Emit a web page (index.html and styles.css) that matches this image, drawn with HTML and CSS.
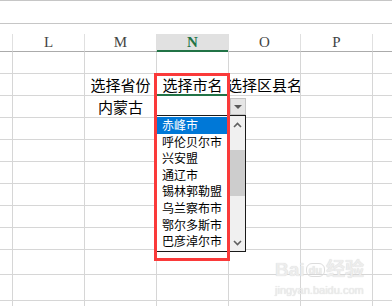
FILE: index.html
```html
<!DOCTYPE html>
<html lang="zh-CN">
<head>
    <meta charset="UTF-8">
    <meta name="viewport" content="width=device-width, initial-scale=1.0">
    <title>二级下拉菜单</title>
    <link rel="stylesheet" href="styles.css">
</head>
<body>
    <div class="sheet">
        <div class="formula-bar"></div>

        <div class="col-heads">
            <div class="corner"></div>
            <div class="col-head">L</div>
            <div class="col-head">M</div>
            <div class="col-head current">N</div>
            <div class="col-head">O</div>
            <div class="col-head">P</div>
            <div class="col-head rest"></div>
        </div>

        <div class="row">
            <div class="corner"></div>
            <div class="cell"></div><div class="cell"></div><div class="cell"></div>
            <div class="cell"></div><div class="cell"></div><div class="cell rest"></div>
        </div>
        <div class="row">
            <div class="corner"></div>
            <div class="cell"></div>
            <div class="cell">选择省份</div>
            <div class="cell above-active">选择市名</div>
            <div class="cell">选择区县名</div>
            <div class="cell"></div><div class="cell rest"></div>
        </div>
        <div class="row">
            <div class="corner"></div>
            <div class="cell"></div>
            <div class="cell">内蒙古</div>
            <div class="cell"></div>
            <div class="cell"></div><div class="cell"></div><div class="cell rest"></div>
        </div>
        <div class="row">
            <div class="corner"></div>
            <div class="cell"></div><div class="cell"></div><div class="cell"></div>
            <div class="cell"></div><div class="cell"></div><div class="cell rest"></div>
        </div>
        <div class="row">
            <div class="corner"></div>
            <div class="cell"></div><div class="cell"></div><div class="cell"></div>
            <div class="cell"></div><div class="cell"></div><div class="cell rest"></div>
        </div>
        <div class="row">
            <div class="corner"></div>
            <div class="cell"></div><div class="cell"></div><div class="cell"></div>
            <div class="cell"></div><div class="cell"></div><div class="cell rest"></div>
        </div>
        <div class="row">
            <div class="corner"></div>
            <div class="cell"></div><div class="cell"></div><div class="cell"></div>
            <div class="cell"></div><div class="cell"></div><div class="cell rest"></div>
        </div>
        <div class="row">
            <div class="corner"></div>
            <div class="cell"></div><div class="cell"></div><div class="cell"></div>
            <div class="cell"></div><div class="cell"></div><div class="cell rest"></div>
        </div>
        <div class="row">
            <div class="corner"></div>
            <div class="cell"></div><div class="cell"></div><div class="cell"></div>
            <div class="cell"></div><div class="cell"></div><div class="cell rest"></div>
        </div>
        <div class="row tall">
            <div class="corner"></div>
            <div class="cell"></div><div class="cell"></div><div class="cell"></div>
            <div class="cell"></div><div class="cell"></div><div class="cell rest"></div>
        </div>
        <div class="row taller">
            <div class="corner"></div>
            <div class="cell"></div><div class="cell"></div><div class="cell"></div>
            <div class="cell"></div><div class="cell"></div><div class="cell rest"></div>
        </div>
        <div class="row">
            <div class="corner"></div>
            <div class="cell"></div><div class="cell"></div><div class="cell"></div>
            <div class="cell"></div><div class="cell"></div><div class="cell rest"></div>
        </div>

        <!-- кнопка списка у ячейки N4 -->
        <div class="drop-btn"><span class="triangle"></span></div>

        <div class="drop-list">
            <ul class="options">
                <li class="selected">赤峰市</li>
                <li>呼伦贝尔市</li>
                <li>兴安盟</li>
                <li>通辽市</li>
                <li>锡林郭勒盟</li>
                <li>乌兰察布市</li>
                <li>鄂尔多斯市</li>
                <li>巴彦淖尔市</li>
            </ul>
            <div class="scrollbar">
                <div class="scroll-arrow">
                    <svg width="9" height="6" viewBox="0 0 9 6"><polyline points="1,5 4.5,1.5 8,5" fill="none" stroke="#606060" stroke-width="1.6"/></svg>
                </div>
                <div class="track"><div class="thumb"></div></div>
                <div class="scroll-arrow">
                    <svg width="9" height="6" viewBox="0 0 9 6"><polyline points="1,1 4.5,4.5 8,1" fill="none" stroke="#606060" stroke-width="1.6"/></svg>
                </div>
            </div>
        </div>

        <div class="red-box"></div>

        <div class="watermark">
            <div class="wm-logo">Bai<span class="wm-du">du</span>经验</div>
            <div class="wm-url">jingyan.baidu.com</div>
        </div>
    </div>
</body>
</html>
```

FILE: styles.css
```css
* {
    margin: 0;
    padding: 0;
    box-sizing: border-box;
}

body {
    background: #fff;
    color: #000;
    font-family: "Noto Sans CJK SC", sans-serif;
    overflow: hidden;
}

.sheet {
    position: relative;
    width: 392px;
    height: 306px;
    overflow: hidden;
}

.formula-bar {
    height: 24px;
    border-top: 1px solid #c6c6c6;
    border-bottom: 1px solid #c6c6c6;
    margin-bottom: 10px;
}

/* заголовки столбцов */
.col-heads {
    display: flex;
    height: 18px;
}

.col-heads .corner {
    width: 12px;
    border-bottom: 1px solid #ababab;
}

.col-head {
    width: 72px;
    border-left: 1px solid #e0e0e0;
    border-bottom: 1px solid #ababab;
    display: flex;
    justify-content: center;
    align-items: center;
    font-family: "Liberation Serif", serif;
    font-size: 15px;
    color: #444;
}

.col-head.current {
    background: #e1e1e1;
    color: #217346;
    font-weight: 700;
    border-bottom-color: #217346;
    box-shadow: inset 0 -1px 0 #217346;
}

.rest {
    flex: 1;
}

/* строки листа */
.row {
    display: flex;
    height: 22px;
}

.row.tall {
    height: 25px;
}

.row.taller {
    height: 26px;
}

.row .corner {
    width: 12px;
    border-bottom: 1px solid #d6d6d6;
}

.cell {
    width: 72px;
    border-left: 1px solid #d6d6d6;
    border-bottom: 1px solid #d6d6d6;
    display: flex;
    justify-content: center;
    align-items: center;
    white-space: nowrap;
    font-size: 15px;
}

.cell.above-active {
    border-bottom-color: #217346;
    box-shadow: inset 0 -1px 0 #217346;
}

/* кнопка выпадающего списка */
.drop-btn {
    position: absolute;
    left: 230px;
    top: 98px;
    width: 16px;
    height: 17px;
    background: #e6e6e6;
    border: 1px solid #c4c4c4;
    display: flex;
    justify-content: center;
    align-items: center;
}

.triangle {
    width: 0;
    height: 0;
    border-left: 4px solid transparent;
    border-right: 4px solid transparent;
    border-top: 4px solid #5a5a5a;
}

.drop-list {
    position: absolute;
    left: 155px;
    top: 115px;
    width: 91px;
    height: 137px;
    border: 1px solid #1a1a1a;
    background: #fff;
    display: flex;
}

.options {
    list-style: none;
    width: 74px;
    padding-top: 1px;
}

.options li {
    height: 16.6px;
    line-height: 16px;
    padding-left: 6px;
    font-size: 12px;
    white-space: nowrap;
}

.options .selected {
    background: #0078d7;
    color: #fff;
}

.scrollbar {
    flex: 1;
    background: #f0f0f0;
    display: flex;
    flex-direction: column;
}

.scroll-arrow {
    height: 17px;
    display: flex;
    justify-content: center;
    align-items: center;
}

.track {
    flex: 1;
    padding-top: 17px;
}

.thumb {
    height: 46px;
    background: #cdcdcd;
}

/* красная рамка выделения */
.red-box {
    position: absolute;
    left: 154px;
    top: 73px;
    width: 76px;
    height: 188px;
    border: 3px solid #fa3a3a;
}

.watermark {
    position: absolute;
    left: 275px;
    top: 260px;
    width: 92px;
    color: #ededed;
    font-family: "Liberation Sans", "Noto Sans CJK SC", sans-serif;
    text-shadow: 0 0 1px #d0d0d0;
}

.wm-logo {
    font-size: 19px;
    font-weight: 700;
    line-height: 20px;
    white-space: nowrap;
}

.wm-logo .wm-du {
    display: inline-block;
    font-size: 11px;
    line-height: 12px;
    padding: 0 2px;
    margin: 0 1px;
    border: 1px solid #dcdcdc;
    border-radius: 6px;
    vertical-align: 2px;
}

.wm-url {
    font-size: 11px;
    line-height: 14px;
    margin-top: 3px;
    white-space: nowrap;
}
```
